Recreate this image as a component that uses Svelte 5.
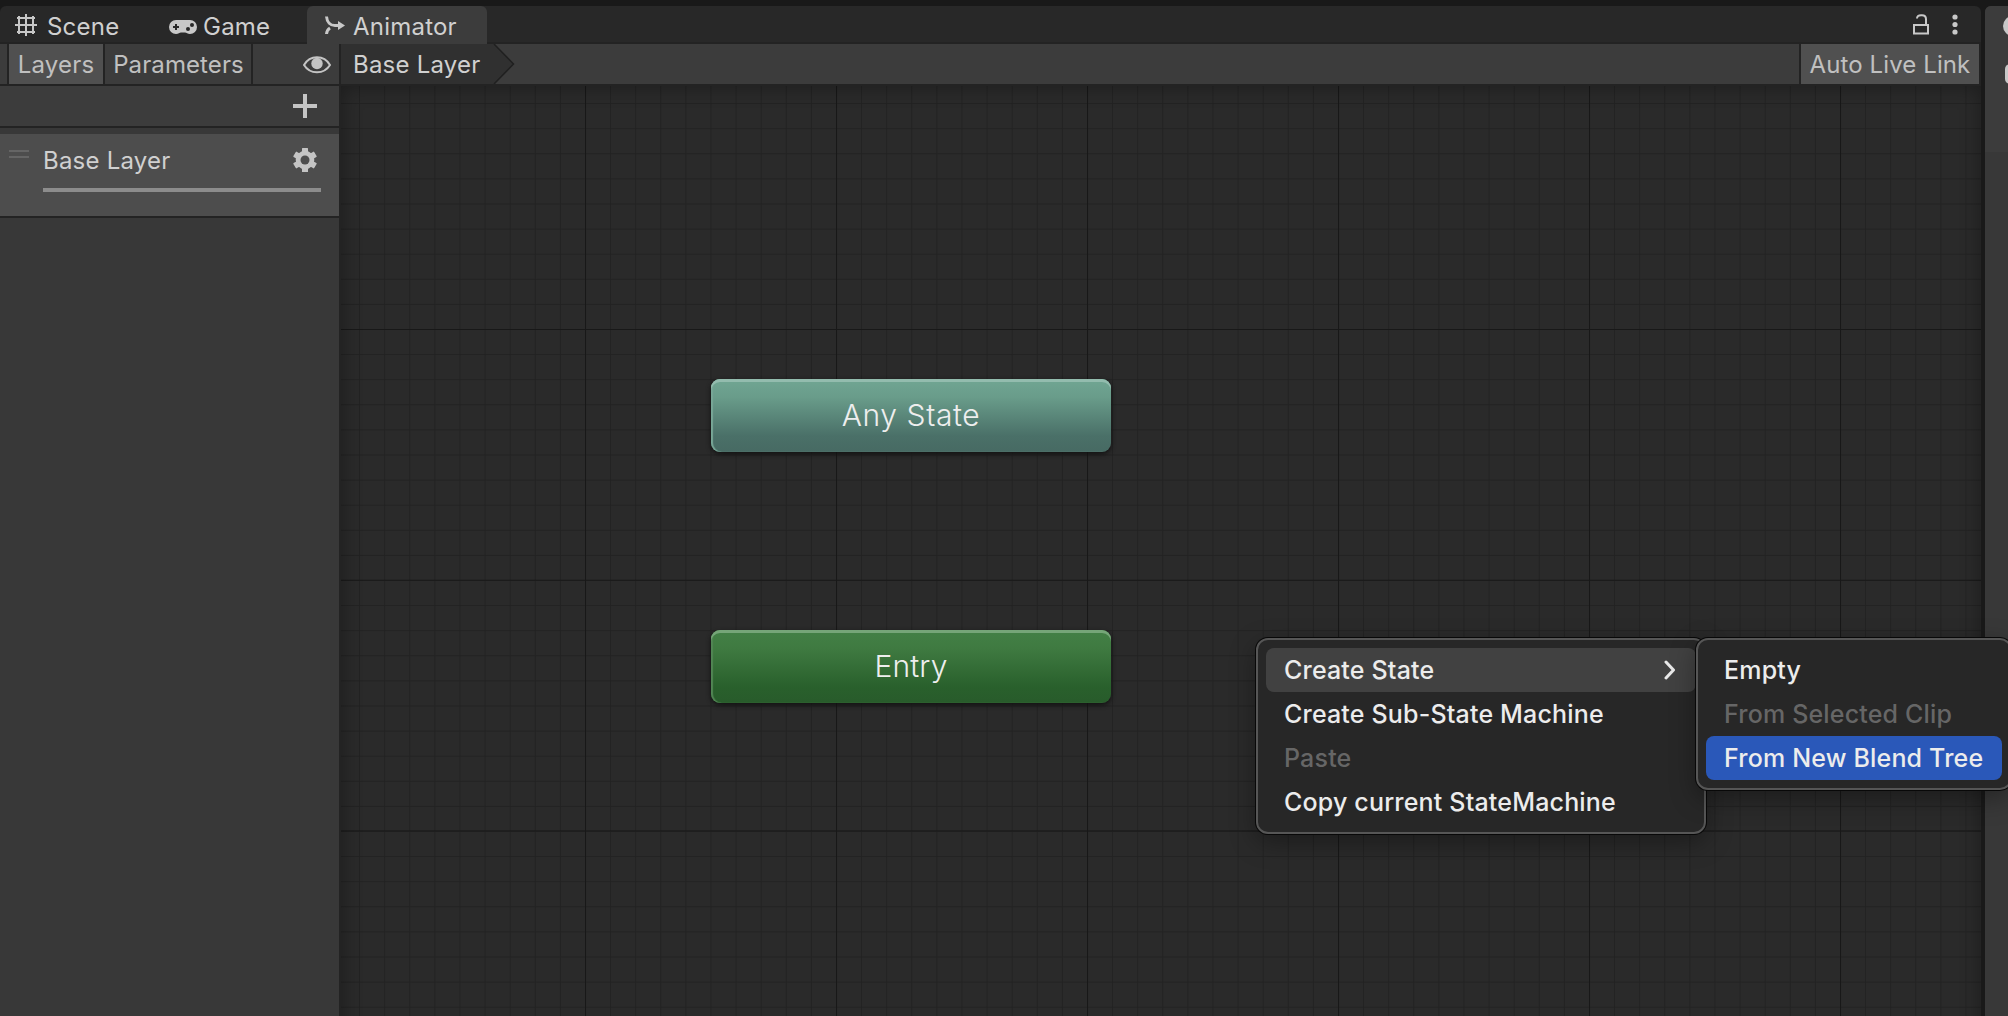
<script>
  const tabs = [
    { name: 'Scene', icon: 'grid' },
    { name: 'Game', icon: 'pad' },
    { name: 'Animator', icon: 'anim', active: true }
  ];
  const menu = [
    { label: 'Create State', hover: true, sub: true },
    { label: 'Create Sub-State Machine' },
    { label: 'Paste', disabled: true },
    { label: 'Copy current StateMachine' }
  ];
  const submenu = [
    { label: 'Empty' },
    { label: 'From Selected Clip', disabled: true },
    { label: 'From New Blend Tree', selected: true }
  ];
</script>

<div class="app">
  <section class="panel">
    <div class="tabs">
      {#each tabs as tab}
        <div class="tab {tab.icon}" class:active={tab.active}>
          {#if tab.icon === 'grid'}
            <svg width="22" height="22" viewBox="0 0 22 22"><path d="M4 2v18M11 0v22M18 2v18M2 4h18M0 11h22M2 18h18" stroke="#c8c8c8" stroke-width="2" fill="none" /></svg>
          {:else if tab.icon === 'pad'}
            <svg width="28" height="14" viewBox="0 0 28 14"><path d="M7 0h14a7 7 0 0 1 0 14c-2.500 0-3.500-1.600-5-1.600h-4c-1.500 0-2.500 1.600-5 1.600a7 7 0 0 1 0-14z" fill="#c8c8c8" /><path d="M7 4v6M4 7h6" stroke="#282828" stroke-width="2" /><circle cx="19" cy="9" r="2" fill="#282828" /><circle cx="23" cy="5" r="2" fill="#282828" /></svg>
          {:else}
            <svg width="20" height="19" viewBox="0 0 20 19"><path d="M1.500.5C2 6.500 5.500 9.500 10 9.500h4M1.500 18c.2-2.800 1.200-4.600 3.500-6" stroke="#c8c8c8" stroke-width="3" fill="none" /><path d="M13 5l7 4.500-7 4.500z" fill="#c8c8c8" /></svg>
          {/if}
          <span>{tab.name}</span>
        </div>
      {/each}
      <div class="tools">
        <svg width="16" height="21" viewBox="0 0 16 21"><path d="M1 11h14v8.500H1zM4 4.500C4 2.500 5.500 1.200 8 1.200h1c2.500 0 4 1.500 4 4V11" stroke="#c8c8c8" stroke-width="2" fill="none" /></svg>
        <svg width="6" height="22" viewBox="0 0 6 22" fill="#c8c8c8"><circle cx="3" cy="3" r="2.600" /><circle cx="3" cy="10.500" r="2.600" /><circle cx="3" cy="18" r="2.600" /></svg>
      </div>
    </div>

    <div class="bar">
      <div class="side-tools">
        <button class="first">Layers</button>
        <button class="second">Parameters</button>
        <svg class="eye" width="28" height="18" viewBox="0 0 28 18"><path d="M1 9c6-10.300 20-10.300 26 0-6 9.700-20 9.700-26 0z" fill="none" stroke="#c4c4c4" stroke-width="2" /><circle cx="14" cy="7.500" r="5.700" fill="#c4c4c4" /></svg>
      </div>
      <div class="crumb">Base Layer</div>
      <svg class="arrow" width="22" height="40" viewBox="0 0 22 40"><path d="M0 0h1l19.500 20L1 40H0z" fill="#303030" /><path d="M1 0l19.500 20L1 40" fill="none" stroke="#202020" stroke-width="1.500" /></svg>
      <button class="live">Auto Live Link</button>
    </div>

    <div class="body">
      <aside>
        <div class="add">
          <svg width="24" height="24" viewBox="0 0 24 24"><path d="M12 0v24M0 12h24" stroke="#c4c4c4" stroke-width="4" /></svg>
        </div>
        <div class="layer">
          <div class="grip"></div>
          <div class="info">
            <div class="title">
              <span>Base Layer</span>
              <svg width="24" height="24" viewBox="-12 -12 24 24"><g fill="#c4c4c4">{#each [0, 60, 120] as a}<rect x="-3" y="-12" width="6" height="24" rx=".6" transform="rotate({a})" />{/each}</g><circle r="6.800" fill="none" stroke="#c4c4c4" stroke-width="5" /><circle r="4.500" fill="#4d4d4d" /></svg>
            </div>
            <div class="weight"></div>
          </div>
        </div>
      </aside>
      <main>
        <svg class="lines" width="1640" height="930">
          <defs>
            <pattern id="minor" width="25.100" height="25.100" patternUnits="userSpaceOnUse" x="-7" y="-8"><path d="M.5 0v25.100M0 .5h25.100" stroke="#222222" stroke-width="1" /></pattern>
            <pattern id="major" width="251" height="250.700" patternUnits="userSpaceOnUse" x="244" y="243"><path d="M.5 0v251M0 .5h251" stroke="#181818" stroke-width="1.200" /></pattern>
          </defs>
          <rect width="100%" height="100%" fill="url(#minor)" />
          <rect width="100%" height="100%" fill="url(#major)" />
        </svg>
        <div class="node any">Any State</div>
        <div class="node entry">Entry</div>
      </main>
    </div>
  </section>
  <section class="right">
    <div class="head"><i class="dot"></i><i class="box"></i></div>
  </section>

  {#snippet items(list)}
    {#each list as item}
      <div class="item" class:hover={item.hover} class:disabled={item.disabled} class:selected={item.selected}>
        <span>{item.label}</span>
        {#if item.sub}
          <svg width="12" height="20" viewBox="0 0 12 20"><path d="M2 2l7.500 8L2 18" fill="none" stroke="#e8e8e8" stroke-width="3" stroke-linecap="round" stroke-linejoin="round" /></svg>
        {/if}
      </div>
    {/each}
  {/snippet}
  <div class="menu main-menu">{@render items(menu)}</div>
  <div class="menu sub-menu">{@render items(submenu)}</div>
</div>

<style>
  :global(body) { margin: 0; background: #191919; }
  .app { position: relative; display: flex; gap: 4px; width: 2008px; height: 1016px; padding-top: 6px; box-sizing: border-box; overflow: hidden; background: #191919; color: #c8c8c8; font: 370 24px/36px Inter, sans-serif; letter-spacing: .22px; }
  .app * { box-sizing: border-box; }
  svg { display: block; flex: none; }
  span { white-space: nowrap; }
  .panel { width: 1981px; display: flex; flex-direction: column; border-radius: 6px 6px 0 0; overflow: hidden; background: #282828; flex: none; }
  .tabs { display: flex; height: 38px; flex: none; box-shadow: inset 0 -2px #232323; }
  .tab { display: flex; align-items: center; height: 38px; color: #d0d0d0; }
  .tab span { padding-top: 4px; }
  .tab.grid { width: 153px; padding-left: 15px; gap: 10px; }
  .tab.pad { width: 154px; padding-left: 16px; gap: 6px; }
  .tab.pad svg { margin-top: 4px; }
  .tab.anim { width: 180px; padding-left: 18px; gap: 8px; }
  .tab.active { background: #3c3c3c; border-radius: 6px 6px 0 0; }
  .tools { margin-left: auto; display: flex; gap: 23px; padding: 8px 23px 0 0; }
  .bar { display: flex; height: 42px; flex: none; background: #3c3c3c; border-bottom: 2px solid #232323; }
  button { height: 40px; padding: 2px 0 0; border: 0 solid #232323; border-right-width: 2px; background: #3c3c3c; color: #c0c0c0; font: inherit; letter-spacing: inherit; text-align: center; white-space: nowrap; }
  .side-tools { display: flex; align-items: center; width: 341px; padding-left: 7px; border-right: 2px solid #232323; }
  .first { width: 98px; border-left-width: 2px; background: #505050; }
  .second { width: 148px; padding-left: 1px; letter-spacing: .1px; }
  .eye { margin-left: 50px; margin-top: 1px; }
  .crumb { width: 152px; padding: 1px 0 0 12px; background: #303030; color: #d0d0d0; line-height: 40px; height: 40px; white-space: nowrap; }
  .live { width: 182px; margin-left: auto; border-left-width: 2px; background: #505050; letter-spacing: .1px; }
  .body { display: flex; flex: 1; min-height: 0; }
  aside { width: 341px; flex: none; background: #383838; border-right: 2px solid #232323; }
  .add { display: flex; align-items: center; justify-content: flex-end; height: 42px; padding-right: 22px; background: #3c3c3c; border-bottom: 2px solid #232323; }
  .layer { display: flex; height: 84px; margin-top: 6px; padding-right: 18px; background: #4d4d4d; border-bottom: 2px solid #232323; }
  .grip { width: 20px; height: 8px; margin: 16px 14px 0 9px; border: solid #656565; border-width: 2px 0; }
  .info { flex: 1; }
  .title { display: flex; align-items: center; justify-content: space-between; height: 54px; padding-right: 4px; color: #d0d0d0; }
  .title svg { margin-bottom: 2px; }
  .weight { height: 4px; background: #8c8c8c; }
  main { position: relative; flex: 1; overflow: hidden; background: #2a2a2a; }
  main::after { content: ''; position: absolute; inset: 0 0 -30px; box-shadow: inset 0 0 20px rgba(0, 0, 0, .35); }
  .node { position: absolute; left: 370px; width: 400px; height: 73px; border-radius: 9px; text-align: center; font-size: 30px; font-weight: 350; letter-spacing: .6px; line-height: 72px; color: #eee; }
  .any { top: 293px; background: linear-gradient(#6fa491 5%, #699c8a 25%, #4a7068 78%, #476a63); box-shadow: inset 0 3px #93bcae, inset 2px 0 1px #78a797, 0 2px 5px #111; }
  .entry { top: 544px; letter-spacing: .1px; background: linear-gradient(#427f45 5%, #3f7a41 25%, #29602c 78%, #285b2b); box-shadow: inset 0 3px #75a578, inset 2px 0 1px #518654, 0 2px 5px #111; }
  .right { flex: 1; background: #383838; border-radius: 6px 0 0 0; overflow: hidden; }
  .head { height: 146px; padding: 10px 0 0 18px; background: #3c3c3c; }
  .dot, .box { display: block; width: 20px; height: 20px; border-radius: 10px; background: #c8c8c8; }
  .box { margin: 28px 0 0 2px; border-radius: 5px; }
  .menu { position: absolute; padding: 8px; border: 2px solid #565656; border-radius: 12px; background: #272727; box-shadow: 0 0 0 1px #080808, 0 8px 26px rgba(0, 0, 0, .35); color: #ececec; font-weight: 500; font-size: 25px; letter-spacing: .18px; }
  .main-menu { left: 1256px; top: 638px; width: 450px; height: 196px; }
  .sub-menu { left: 1696px; top: 638px; width: 316px; height: 152px; }
  .item { display: flex; align-items: center; justify-content: space-between; height: 44px; padding: 0 20px 0 18px; border-radius: 8px; }
  .item.hover { background: #414141; }
  .item.disabled { color: #666; }
  .item.selected { background: #2a58b9; }
</style>
